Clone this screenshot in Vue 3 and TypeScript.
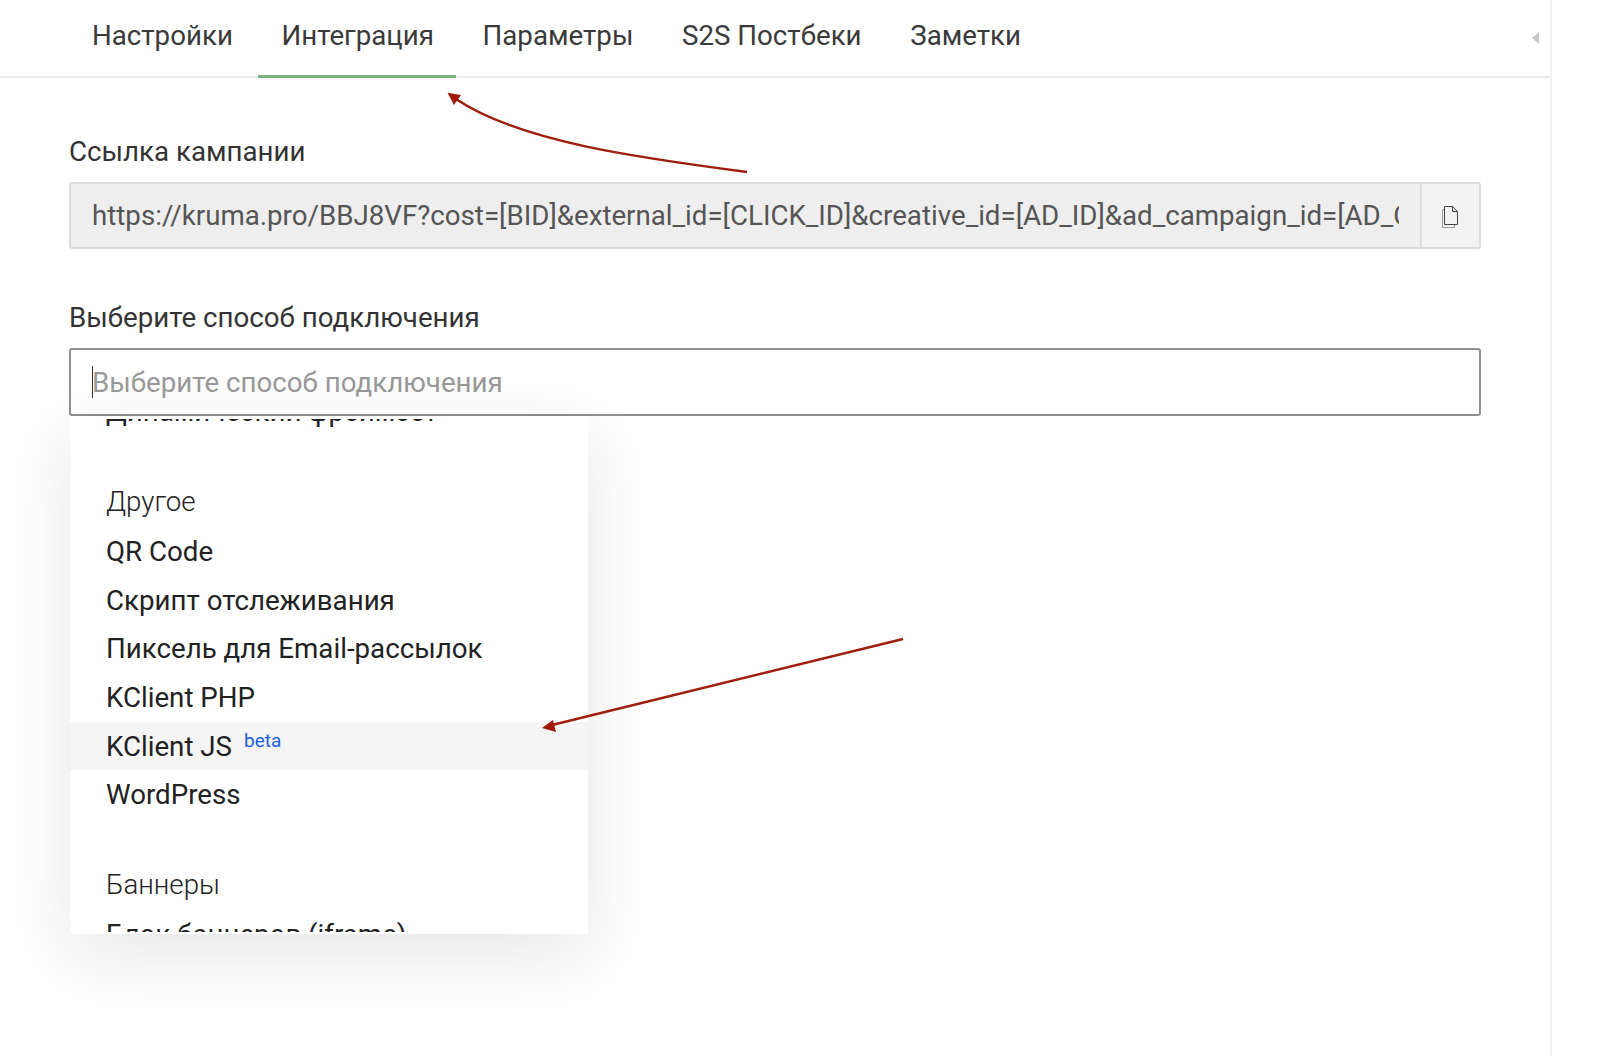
<script setup lang="ts">
const tabs = ['Настройки', 'Интеграция', 'Параметры', 'S2S Постбеки', 'Заметки']
const active = 'Интеграция'
const link = 'https://kruma.pro/BBJ8VF?cost=[BID]&external_id=[CLICK_ID]&creative_id=[AD_ID]&ad_campaign_id=[AD_CAMPAIGN_ID]&source=[SOURCE]'
const others = ['QR Code', 'Скрипт отслеживания', 'Пиксель для Email-рассылок', 'KClient PHP', 'KClient JS', 'WordPress']
</script>

<template>
  <div class="page">
    <main class="panel">
      <nav class="tabs">
        <a v-for="t in tabs" :key="t" class="tab" :class="{ active: t === active }">{{ t }}</a>
        <span class="collapse"></span>
      </nav>
      <section class="content">
        <label class="label">Ссылка кампании</label>
        <div class="link-group">
          <div class="link-value"><span class="link-text">{{ link }}</span></div>
          <button class="copy" type="button" aria-label="Копировать">
            <svg width="16" height="22" viewBox="0 0 16 22" fill="none">
              <path d="M2.5 3.5H.5V21.5H12.5V18.5" stroke="#999" />
              <path d="M2.5 .5H10.5L15.5 5.5V18.5H2.5Z" fill="#f3f3f3" stroke="#444" />
              <path d="M10.5 .5V5.5H15.5" stroke="#444" />
            </svg>
          </button>
        </div>
        <label class="label second">Выберите способ подключения</label>
        <div class="select">
          <div class="select-input"><i class="caret"></i>Выберите способ подключения</div>
          <div class="menu">
            <div class="menu-scroll">
              <div class="menu-inner">
                <div class="item">Динамический фреймсет</div>
                <div class="group">Другое</div>
                <div v-for="o in others" :key="o" class="item" :class="{ hover: o === 'KClient JS' }">
                  {{ o }}<sup v-if="o === 'KClient JS'" class="beta">beta</sup>
                </div>
                <div class="group">Баннеры</div>
                <div class="item">Блок баннеров (iframe)</div>
              </div>
            </div>
          </div>
        </div>
      </section>
    </main>
    <svg class="arrows" width="1600" height="1058" viewBox="0 0 1600 1058" fill="none">
      <path d="M747 172C640 158 520 142 456 99" stroke="#a01c0c" stroke-width="2.4" />
      <path d="M447.5 92.7L461 95L454 105Z" fill="#a01c0c" />
      <path d="M903 639L552 725" stroke="#a01c0c" stroke-width="2.4" />
      <path d="M542 728L553 720L556 732Z" fill="#a01c0c" />
    </svg>
  </div>
</template>

<style>
html, body { margin: 0; background: #fff; }
</style>

<style scoped>
.page {
  position: relative;
  width: 1600px;
  height: 1058px;
  overflow: hidden;
  font-family: Roboto, "Noto Sans", sans-serif;
  font-size: 27.7px;
  color: #333;
}
.panel {
  width: 1550px;
  height: 1056px;
  border-right: 2px solid #f1f1f1;
}
.tabs {
  display: flex;
  align-items: stretch;
  gap: 3.6px;
  position: relative;
  height: 76px;
  padding-left: 69px;
  border-bottom: 2px solid #e9e9e9;
}
.tab {
  display: flex;
  align-items: center;
  padding: 0 22px 4px 23px;
  margin-bottom: -2px;
  border-bottom: 3px solid transparent;
  color: #3a3a3a;
}
.tab.active { border-bottom-color: #7cb27c; }
.collapse {
  position: absolute;
  right: 11px;
  top: 32px;
  border-style: solid;
  border-width: 6px 7px 6px 0;
  border-color: transparent #c8c8c8 transparent transparent;
}
.content { padding: 0 69px; }
.label {
  display: block;
  margin-top: 58px;
  line-height: 32px;
  color: #333;
}
.label.second { margin-top: 53px; }
.link-group {
  display: flex;
  height: 67px;
  width: 1412px;
  margin-top: 14px;
  box-sizing: border-box;
  border: 2px solid #dcdcdc;
  border-radius: 3px;
  background: #eeeeee;
}
.link-value {
  flex: 1;
  min-width: 0;
  padding: 0 21px;
  display: flex;
  align-items: center;
  color: #555;
}
.link-text { white-space: nowrap; overflow: hidden; }
.copy {
  width: 59px;
  padding: 2px 2px 0 0;
  border: 0;
  border-left: 2px solid #dcdcdc;
  background: #f3f3f3;
  display: flex;
  align-items: center;
  justify-content: center;
}
.select { position: relative; width: 1412px; margin-top: 14px; }
.select-input {
  height: 68px;
  box-sizing: border-box;
  border: 2px solid #8f8f8f;
  border-radius: 3px;
  padding-left: 21px;
  display: flex;
  align-items: center;
  color: #999;
  position: relative;
}
.caret {
  position: absolute;
  left: 21px;
  top: 16px;
  width: 1px;
  height: 32px;
  background: #333;
}
.menu {
  position: absolute;
  left: 1px;
  top: 68px;
  width: 518px;
  height: 518px;
  box-sizing: border-box;
  padding: 3px 0 2px;
  background: #fff;
  box-shadow: 0 20px 70px rgba(0, 0, 0, 0.1);
}
.menu-scroll { height: 100%; overflow: hidden; }
.menu-inner { margin-top: -32px; }
.item {
  height: 48.6px;
  line-height: 49.6px;
  padding-left: 36px;
  color: #222;
  white-space: nowrap;
}
.item.hover { background: #f5f5f5; }
.group {
  height: 48.6px;
  line-height: 46.6px;
  padding-left: 36px;
  margin-top: 43px;
  font-weight: 300;
  color: #222;
}
.beta {
  font-size: 19px;
  line-height: 0;
  margin-left: 12px;
  vertical-align: 9px;
  color: #2060d8;
}
.arrows { position: absolute; left: 0; top: 0; pointer-events: none; }
</style>
